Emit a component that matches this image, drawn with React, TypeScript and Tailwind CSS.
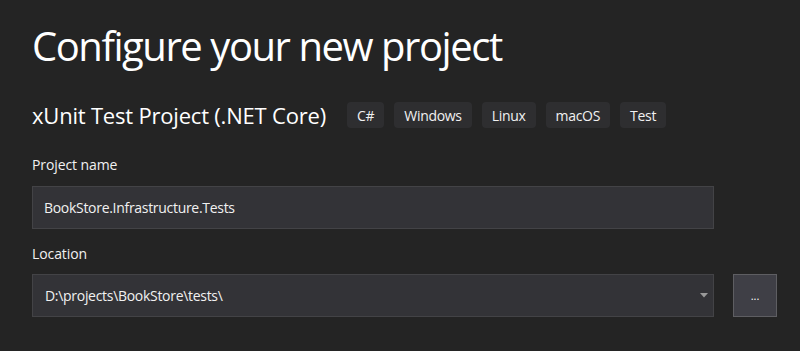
import React from "react";

const tags = ["C#", "Windows", "Linux", "macOS", "Test"];

export default function App() {
  return (
    <div
      className="w-[800px] h-[351px] bg-[#242424] text-[#f1f1f1] overflow-hidden pl-[32px] pt-[22px]"
      style={{ fontFamily: '"Open Sans", "Noto Sans", sans-serif' }}
    >
      <h1 className="text-[40px] leading-[48px] font-normal tracking-[-1.45px] text-white">
        Configure your new project
      </h1>
      <div className="flex items-center mt-[32px] h-[26px]">
        <div className="text-[22px] leading-[26px] text-white tracking-[-0.2px] w-[315px]">
          xUnit Test Project (.NET Core)
        </div>
        <div className="flex gap-[10px]">
          {tags.map((t) => (
            <span
              key={t}
              className="h-[26px] px-[10px] flex items-center rounded-[4px] bg-[#2e2e30] text-[14px] tracking-[-0.3px] text-[#f1f1f1]"
            >
              {t}
            </span>
          ))}
        </div>
      </div>
      <div className="mt-[27px] text-[14px] leading-[20px] tracking-[-0.1px]">Project name</div>
      <div className="mt-[11px] w-[682px] h-[43px] bg-[#333337] border border-[#434346] flex items-center pl-[11px] text-[14px] tracking-[-0.3px]">
        BookStore.Infrastructure.Tests
      </div>
      <div className="mt-[15px] text-[14px] leading-[20px] tracking-[-0.1px]">Location</div>
      <div className="mt-[10px] flex items-center">
        <div className="w-[682px] h-[43px] bg-[#333337] border border-[#434346] flex items-center pl-[12px] pr-[5px] text-[14px] tracking-[-0.3px]">
          <span className="flex-1">D:\projects\BookStore\tests\</span>
          <svg width="8" height="5" viewBox="0 0 8 5">
            <path d="M0 0 H8 L4 4.5 Z" fill="#9a9a9a" />
          </svg>
        </div>
        <div className="ml-[19px] w-[44px] h-[43px] bg-[#3f3f46] border border-[#5e5e62] flex items-center justify-center text-[11px] leading-none pb-[1px] text-white">
          ...
        </div>
      </div>
    </div>
  );
}
